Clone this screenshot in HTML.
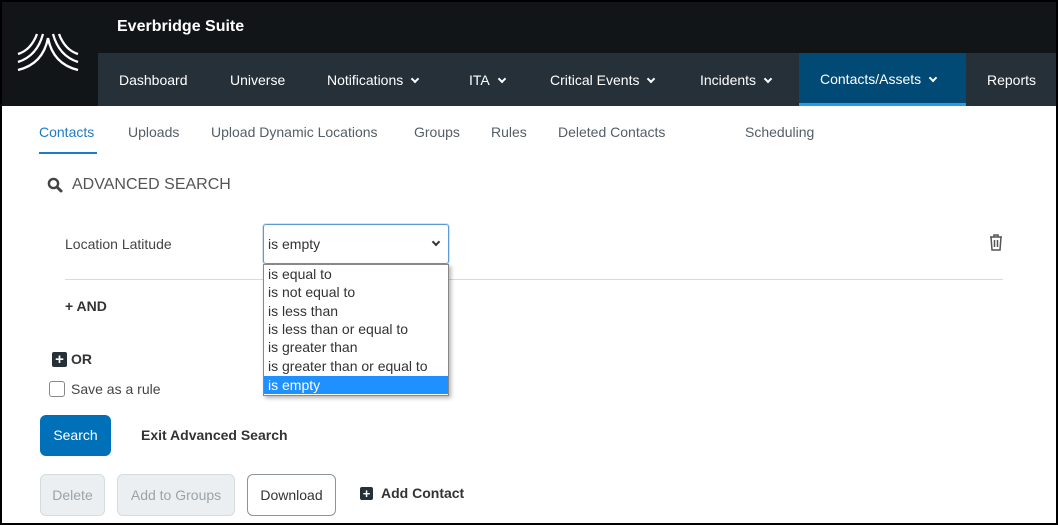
<!DOCTYPE html>
<html><head><style>
*{margin:0;padding:0;box-sizing:border-box}
body{width:1058px;height:525px;position:relative;overflow:hidden;background:#fff;font-family:"Liberation Sans",Arial,sans-serif;}
.a{position:absolute;white-space:nowrap}
.nav{color:#fff;font-size:14px;top:72px}
.tab{color:#555d66;font-size:14px;top:124px}
.chev{display:inline-block;width:6px;height:6px;border-right:2px solid #fff;border-bottom:2px solid #fff;transform:rotate(45deg);margin-left:9px;position:relative;top:-3px}
.opt{position:absolute;left:0;width:184px;height:18.3px;font-size:14px;color:#333;padding-left:4px;line-height:18px}
.btn{position:absolute;border-radius:6px;font-size:14px;text-align:center}
</style></head><body>
<div class="a" style="left:0;top:0;width:1058px;height:525px;border:2px solid #000;z-index:10"></div>
<div class="a" style="left:0;top:0;width:1058px;height:53px;background:#111518"></div>
<div class="a" style="left:0;top:0;width:98px;height:106px;background:#111518"></div>
<div class="a" style="left:98px;top:53px;width:960px;height:53px;background:#263038"></div>
<div class="a" style="left:799px;top:53px;width:167px;height:53px;background:#004a75;border-bottom:3px solid #2a9be0"></div>
<svg class="a" style="left:15px;top:30px" width="66" height="46" viewBox="0 0 66 46" fill="none" stroke="#fff" stroke-width="2.3">
<path d="M3 24 Q16 20 22 4"/><path d="M3 32 Q22 26 28 4"/><path d="M3 40 Q28 34 33 8"/>
<path d="M63 24 Q50 20 44 4"/><path d="M63 32 Q44 26 38 4"/><path d="M63 40 Q38 34 33 8"/>
</svg>
<div class="a" style="left:117px;top:18px;color:#fff;font-size:16px;font-weight:bold">Everbridge Suite</div>
<div class="a nav" style="left:119px">Dashboard</div>
<div class="a nav" style="left:230px">Universe</div>
<div class="a nav" style="left:327px">Notifications<span class="chev"></span></div>
<div class="a nav" style="left:469px">ITA<span class="chev"></span></div>
<div class="a nav" style="left:550px">Critical Events<span class="chev"></span></div>
<div class="a nav" style="left:700px">Incidents<span class="chev"></span></div>
<div class="a nav" style="left:820px;top:71px">Contacts/Assets<span class="chev"></span></div>
<div class="a nav" style="left:987px">Reports</div>
<div class="a tab" style="left:39px;color:#1f7ac4">Contacts</div>
<div class="a" style="left:39px;top:152px;width:58px;height:2px;background:#1f7ac4"></div>
<div class="a tab" style="left:128px">Uploads</div>
<div class="a tab" style="left:211px">Upload Dynamic Locations</div>
<div class="a tab" style="left:414px">Groups</div>
<div class="a tab" style="left:491px">Rules</div>
<div class="a tab" style="left:558px">Deleted Contacts</div>
<div class="a tab" style="left:745px">Scheduling</div>
<svg class="a" style="left:47px;top:177px" width="16" height="16" viewBox="0 0 16 16"><circle cx="6.5" cy="6.5" r="4.6" fill="none" stroke="#444" stroke-width="2.4"/><path d="M10 10 L14 14" stroke="#444" stroke-width="3" stroke-linecap="round"/></svg>
<div class="a" style="left:72px;top:176px;font-size:16px;color:#555">ADVANCED SEARCH</div>
<div class="a" style="left:65px;top:236px;font-size:14px;color:#444">Location Latitude</div>
<div class="a" style="left:263px;top:224px;width:186px;height:40px;border:1px solid #5b9bd5;border-radius:3px;box-shadow:0 0 0 1px #d3e5f5"></div>
<div class="a" style="left:268px;top:236px;font-size:14px;color:#333">is empty</div>
<div class="a" style="left:433px;top:239px;width:6px;height:6px;border-right:2px solid #333;border-bottom:2px solid #333;transform:rotate(45deg)"></div>
<div class="a" style="left:65px;top:279px;width:938px;height:1px;background:#d5dcdf"></div>
<svg class="a" style="left:988px;top:233px" width="16" height="18" viewBox="0 0 16 18" fill="none" stroke="#555" stroke-width="1.5"><path d="M2 4 H14 M6 4 V2 H10 V4 M3 4 L4 17 H12 L13 4 M6.5 7 V14 M9.5 7 V14"/></svg>
<div class="a" style="left:65px;top:298px;font-size:14px;font-weight:bold;color:#333">+ AND</div>
<div class="a" style="left:263px;top:264px;width:186px;height:132px;border:1px solid #888;background:#fff;box-shadow:2px 2px 4px rgba(0,0,0,.3)">
<div class="opt" style="top:0">is equal to</div>
<div class="opt" style="top:18.3px">is not equal to</div>
<div class="opt" style="top:36.6px">is less than</div>
<div class="opt" style="top:54.9px">is less than or equal to</div>
<div class="opt" style="top:73.2px">is greater than</div>
<div class="opt" style="top:91.5px">is greater than or equal to</div>
<div class="opt" style="top:111px;background:#1e90ff;color:#fff">is empty</div>
</div>
<div class="a" style="left:52px;top:352px;width:15px;height:15px;background:#263038;border-radius:2px;color:#fff;font-size:15px;line-height:15px;text-align:center;font-weight:bold">+</div>
<div class="a" style="left:71px;top:351px;font-size:14px;font-weight:bold;color:#333">OR</div>
<div class="a" style="left:49px;top:381px;width:16px;height:16px;border:1px solid #888;border-radius:3px"></div>
<div class="a" style="left:71px;top:381px;font-size:14px;color:#444">Save as a rule</div>
<div class="btn" style="left:40px;top:415px;width:71px;height:41px;background:#0070b8;color:#fff;line-height:41px">Search</div>
<div class="a" style="left:141px;top:427px;font-size:14px;font-weight:bold;color:#333">Exit Advanced Search</div>
<div class="btn" style="left:40px;top:474px;width:65px;height:42px;background:#eceff1;border:1px solid #d5dcdf;color:#9aa3aa;line-height:40px">Delete</div>
<div class="btn" style="left:117px;top:474px;width:118px;height:42px;background:#eceff1;border:1px solid #d5dcdf;color:#9aa3aa;line-height:40px">Add to Groups</div>
<div class="btn" style="left:247px;top:474px;width:89px;height:42px;background:#fff;border:1px solid #8a949b;color:#333;line-height:40px">Download</div>
<div class="a" style="left:360px;top:487px;width:13px;height:13px;background:#263038;border-radius:2px;color:#fff;font-size:13px;line-height:13px;text-align:center;font-weight:bold">+</div>
<div class="a" style="left:381px;top:485px;font-size:14px;font-weight:bold;color:#333">Add Contact</div>
</body></html>
